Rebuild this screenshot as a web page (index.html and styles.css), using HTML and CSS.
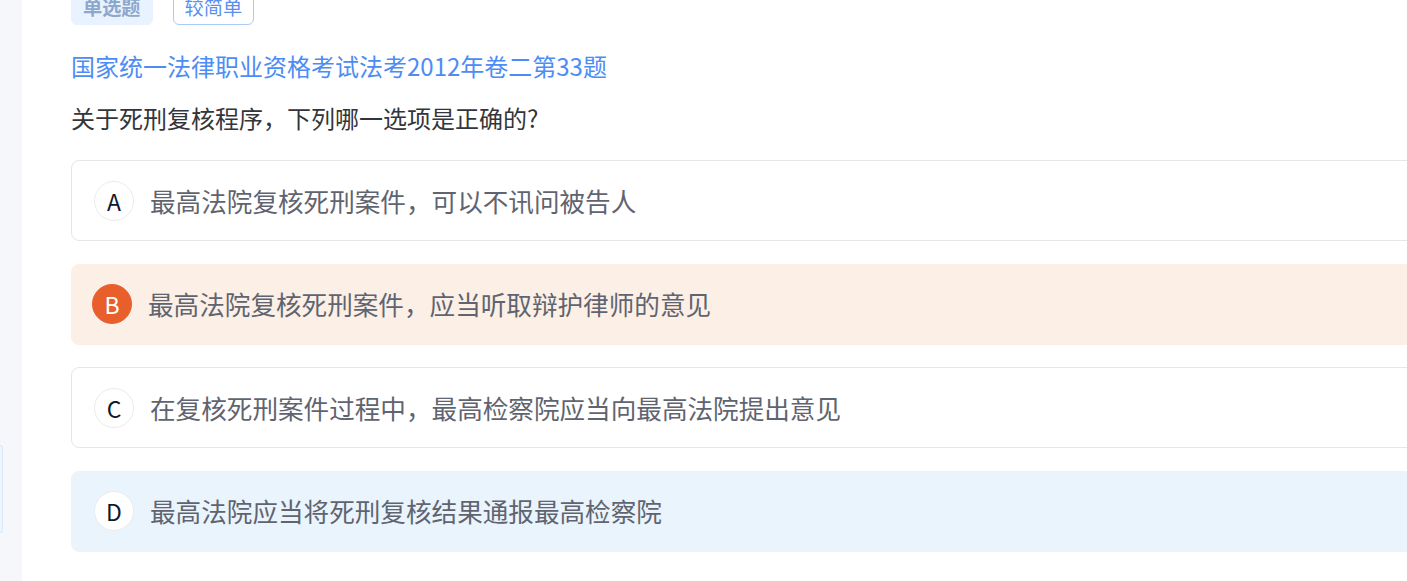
FILE: index.html
```html
<!DOCTYPE html>
<html lang="zh-CN">

<head>
  <meta charset="UTF-8" />
  <meta name="viewport" content="width=device-width, initial-scale=1.0" />
  <title>单选题</title>
  <link rel="stylesheet" href="styles.css">
</head>

<body>
  <div class="page">
    <div class="sidebar">
      <div class="sidebar-item"></div>
    </div>
    <div class="main">
      <div class="tags">
        <span class="tag tag-type">单选题</span>
        <span class="tag tag-level">较简单</span>
      </div>
      <p class="source">国家统一法律职业资格考试法考2012年卷二第33题</p>
      <p class="question">关于死刑复核程序，下列哪一选项是正确的?</p>
      <ul class="options">
        <li class="option">
          <span class="option-key">A</span>
          <span class="option-text">最高法院复核死刑案件，可以不讯问被告人</span>
        </li>
        <li class="option wrong">
          <span class="option-key">B</span>
          <span class="option-text">最高法院复核死刑案件，应当听取辩护律师的意见</span>
        </li>
        <li class="option">
          <span class="option-key">C</span>
          <span class="option-text">在复核死刑案件过程中，最高检察院应当向最高法院提出意见</span>
        </li>
        <li class="option right">
          <span class="option-key">D</span>
          <span class="option-text">最高法院应当将死刑复核结果通报最高检察院</span>
        </li>
      </ul>
    </div>
  </div>
</body>

</html>
```

FILE: styles.css
```css
* {
  box-sizing: border-box;
}

body {
  margin: 0;
  background: #fff;
  font-family: "Noto Sans CJK SC", "Noto Sans", sans-serif;
}

.page {
  display: flex;
  height: 581px;
  overflow: hidden;
}

.sidebar {
  flex: 0 0 22px;
  background: #f5f7fa;
}

.sidebar-item {
  width: 3px;
  height: 88px;
  margin-top: 445px;
  border: 1px solid #d8e8fb;
  border-left: none;
  border-radius: 0 4px 4px 0;
  background: #eef5fe;
}

.main {
  flex: 1;
  min-width: 0;
  padding-left: 49px;
  overflow: hidden;
}

.tags {
  display: flex;
  gap: 20px;
  margin-top: -11px;
}

.tag {
  height: 36px;
  padding: 0 11px;
  border-radius: 6px;
  font-size: 19.2px;
  line-height: 34px;
  white-space: nowrap;
}

.tag-type {
  border: 1px solid #e8f3ff;
  background: #e8f3ff;
  color: #8ea7cc;
  font-weight: bold;
}

.tag-level {
  border: 1px solid #a9cdf6;
  background: #fff;
  color: #5a8fef;
}

.source {
  margin: 23px 0 0 0;
  color: #4d8cf5;
  font-size: 24px;
  line-height: 36px;
}

.question {
  margin: 16px 0 0 0;
  color: #33353b;
  font-size: 24px;
  line-height: 36px;
}

.options {
  width: 1400px;
  margin: 24px 0 0 0;
  padding: 0;
  list-style: none;
}

.option {
  display: flex;
  align-items: center;
  height: 81px;
  margin-bottom: 22.6px;
  padding-left: 22px;
  border: 1px solid #e6e6e6;
  border-radius: 8px;
}

.option-key {
  display: flex;
  justify-content: center;
  align-items: center;
  width: 40px;
  height: 40px;
  margin-right: 16px;
  border: 1px solid #ebebeb;
  border-radius: 50%;
  background: #fff;
  color: #10182b;
  font-size: 23px;
}

.option-text {
  color: #5f6470;
  font-size: 25.6px;
  line-height: 36px;
}

.option.wrong {
  padding-left: 20px;
  border-color: #fcefe6;
  background: #fcefe6;
}

.option.wrong .option-key {
  border-color: #e95f2b;
  background: #e95f2b;
  color: #fff;
}

.option.right {
  border-color: #eaf4fd;
  background: #eaf4fd;
}
```
